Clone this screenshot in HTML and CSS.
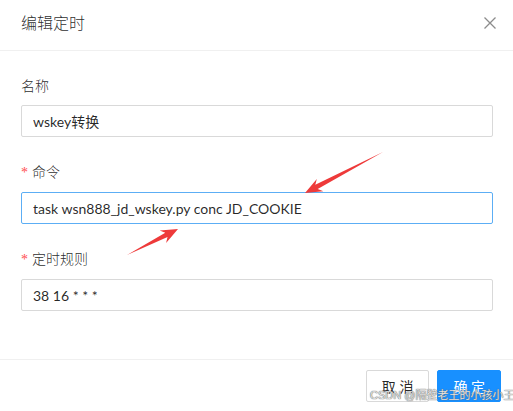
FILE: index.html
```html
<!DOCTYPE html>
<html lang="zh-CN">
<head>
    <meta charset="UTF-8">
    <meta name="viewport" content="width=device-width, initial-scale=1.0">
    <title>编辑定时</title>
    <link rel="stylesheet" href="styles.css">
</head>
<body>

    <div class="modal">
        <div class="modal-header">
            <div class="modal-title">编辑定时</div>
            <button class="modal-close" aria-label="close">
                <svg width="12" height="12" viewBox="0 0 12 12">
                    <path d="M0.5 0.5 L11.5 11.5 M11.5 0.5 L0.5 11.5" stroke="#8c8c8c" stroke-width="1.3" fill="none"/>
                </svg>
            </button>
        </div>

        <div class="modal-body">
            <div class="form-item">
                <label class="form-label">名称</label>
                <input class="form-input" type="text" value="wskey转换">
            </div>
            <div class="form-item">
                <label class="form-label required">命令</label>
                <input class="form-input focused" type="text" value="task wsn888_jd_wskey.py conc JD_COOKIE">
            </div>
            <div class="form-item">
                <label class="form-label required">定时规则</label>
                <input class="form-input" type="text" value="38 16 * * *">
            </div>
        </div>

        <div class="modal-footer">
            <button class="btn">取 消</button>
            <button class="btn btn-primary">确 定</button>
        </div>
    </div>

    <!-- annotation arrows drawn over the screenshot -->
    <svg class="arrows" width="513" height="411" viewBox="0 0 513 411">
        <polygon points="383,152 315.3,184.7 316.8,178.9 305,193 323.4,191.3 317.7,189.1" fill="#ee3a3a"/>
        <polygon points="127,255 165.3,232.7 159.7,230.5 178,229 166.1,242.9 167.5,237.1" fill="#ee3a3a"/>
    </svg>

    <div class="watermark">CSDN @隔壁老王的小孩小王</div>

</body>
</html>
```

FILE: styles.css
```css
body {
    margin: 0;
    background-color: #7a7a7a;
    font-family: Lato, "Noto Sans CJK SC", sans-serif;
    font-size: 14px;
    font-weight: 300;
    color: rgba(0, 0, 0, 0.85);
    overflow: hidden;
}
.modal {
    position: relative;
    width: 520px;
    margin: -4px 0 0 -3px;
    background-color: white;
    border-radius: 2px;
}
.modal-header {
    padding: 16px 24px;
    border-bottom: 1px solid #f0f0f0;
}
.modal-title {
    font-size: 16px;
    line-height: 22px;
}
.modal-close {
    position: absolute;
    top: 0;
    right: 0;
    width: 54px;
    height: 54px;
    display: flex;
    align-items: center;
    justify-content: center;
    border: none;
    background: none;
    padding: 0;
    cursor: pointer;
}
.modal-body {
    padding: 24px;
}
.form-item {
    display: flex;
    flex-direction: column;
    margin-bottom: 24px;
}
.form-label {
    line-height: 22px;
    padding-bottom: 8px;
}
.form-label.required::before {
    content: "*";
    color: #ff4d4f;
    margin-right: 4px;
    font-family: "Liberation Serif", serif;
}
.form-input {
    box-sizing: border-box;
    height: 32px;
    padding: 4px 11px;
    border: 1px solid #d9d9d9;
    border-radius: 2px;
    font-family: inherit;
    font-size: 14px;
    font-weight: 400;
    color: rgba(0, 0, 0, 0.85);
    outline: none;
}
.form-input.focused {
    border-color: #5caef5;
}
.modal-footer {
    display: flex;
    justify-content: flex-end;
    gap: 8px;
    padding: 10px 16px;
    border-top: 1px solid #f0f0f0;
}
.btn {
    height: 32px;
    padding: 4px 15px;
    border: 1px solid #d9d9d9;
    border-radius: 2px;
    background-color: white;
    font-family: inherit;
    font-size: 14px;
    font-weight: 400;
    color: rgba(0, 0, 0, 0.85);
    cursor: pointer;
}
.btn-primary {
    background-color: #1890ff;
    border-color: #1890ff;
    color: white;
}
.arrows {
    position: absolute;
    top: 0;
    left: 0;
    pointer-events: none;
}
.watermark {
    position: absolute;
    left: 370px;
    top: 388px;
    white-space: nowrap;
    font-family: "Liberation Sans", "Noto Sans CJK SC", sans-serif;
    font-size: 11px;
    line-height: 15px;
    font-weight: 400;
    color: #e4e4e4;
    text-shadow: 0 0 1px #555, 0 0 1px #777;
}
```
